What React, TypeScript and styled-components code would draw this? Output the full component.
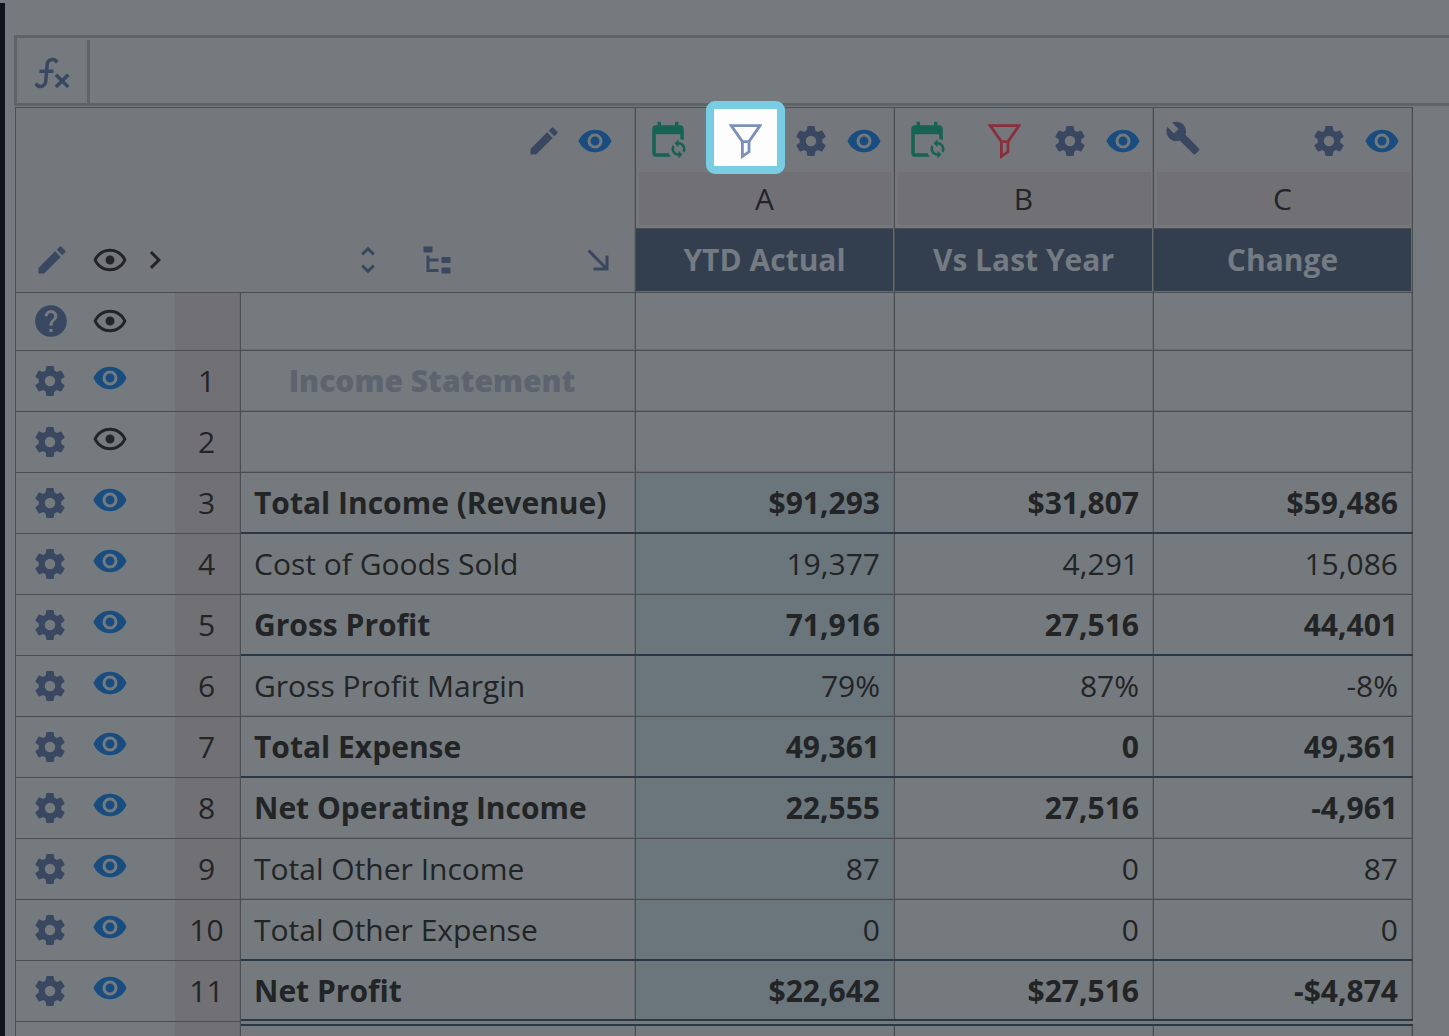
import React from "react";
import styled, { createGlobalStyle, css } from "styled-components";

const c = {
  page: "#747a7d",
  head: "#74777b",
  letter: "#707075",
  tint: "#6b757c",
  line: "#4b4e51",
  soft: "#686c6f",
  frame: "#5f6466",
  navy: "#333e4e",
  rule: "#2c3746",
  ink: "#222426",
  muted: "#5e6370",
  slate: "#3a4761",
  blue: "#194d80",
  green: "#166253",
  red: "#8b2f3f",
  rail: "#10131c",
  cyan: "#78cde2",
};

const Global = createGlobalStyle`
  *, *::before, *::after { box-sizing: border-box; }
  body {
    margin: 0;
    background: ${c.page};
    color: ${c.ink};
    font-family: "Open Sans", "Noto Sans", sans-serif;
    font-size: 30px;
    line-height: 40px;
  }
`;

const Shell = styled.div`
  display: flex;
  height: 100vh;
  overflow: hidden;
`;

const Rail = styled.div`
  flex: 0 0 5px;
  margin-top: 3px;
  background: ${c.rail};
`;

const Main = styled.main`
  flex: 1;
  min-width: 0;
  padding: 35px 0 0 9px;
`;

const FormulaBar = styled.div`
  display: flex;
  align-items: flex-end;
  height: 71px;
  border: 3px solid ${c.frame};
  border-right: 0;
`;

const FormulaLabel = styled.label`
  display: flex;
  align-items: center;
  justify-content: center;
  flex: 0 0 73px;
  height: 63px;
  padding-top: 3px;
  border-right: 3px solid ${c.frame};
  color: ${c.slate};
`;

const FormulaInput = styled.input`
  flex: 1;
  min-width: 0;
  height: 63px;
  padding: 0 16px;
  border: 0;
  outline: 0;
  background: transparent;
  color: ${c.ink};
  font: inherit;
`;

const Grid = styled.table`
  width: 1398px;
  margin: 1px 0 0 1px;
  border-spacing: 0;
  table-layout: fixed;
`;

const HeadCell = styled.th`
  height: 186px;
  padding: 1px 2px 2px 0;
  background: ${c.head};
  vertical-align: top;
  font-weight: 400;
  box-shadow: inset 0 1px ${c.line}, inset 0 -1px ${c.line}, inset -1px 0 ${c.line},
    inset -2px 0 ${c.soft}, inset 0 -2px ${c.soft};
`;

const CornerCell = styled(HeadCell)`
  padding: 16px 20px 15px 19px;
  box-shadow: inset 1px 0 ${c.line}, inset 0 1px ${c.line}, inset 0 -1px ${c.line},
    inset -1px 0 ${c.line}, inset -2px 0 ${c.soft};
`;

const CornerTools = styled.div`
  display: flex;
  flex-direction: column;
  justify-content: space-between;
  height: 155px;
`;

const ToolsRow = styled.div<{ $gap: number }>`
  display: flex;
  align-items: center;
  gap: ${(p) => p.$gap}px;
`;

const CornerTop = styled(ToolsRow)`
  justify-content: flex-end;
  padding-right: 3px;
`;

const CornerBottom = styled.div`
  display: grid;
  grid-template-columns: 316px 1fr auto;
`;

const ColumnTools = styled.div`
  display: flex;
  align-items: center;
  justify-content: space-between;
  height: 64px;
  padding: 2px 11px 0 11px;
`;

const Letter = styled.div`
  height: 53px;
  margin: 0 1px 3px 3px;
  padding-right: 2px;
  background: ${c.letter};
  line-height: 54px;
  text-align: center;
`;

const Title = styled.div`
  height: 63px;
  border-top: 1px solid ${c.line};
  background: ${c.navy};
  color: #747b82;
  font-weight: 700;
  line-height: 61px;
  text-align: center;
`;

const IconButton = styled.button<{ $tone: string; $raised?: boolean }>`
  position: relative;
  display: flex;
  padding: 0 0 ${(p) => (p.$raised ? 6 : 0)}px;
  border: 0;
  background: none;
  color: ${(p) => p.$tone};
  cursor: pointer;
  svg {
    position: relative;
    display: block;
  }
`;

const SpotlightButton = styled(IconButton)`
  &::before {
    content: "";
    position: absolute;
    inset: -23px -23px -15px -22px;
    border: 8px solid ${c.cyan};
    border-radius: 9px;
    background: #fdfdfd;
  }
`;

type Rule = "soft" | "strong" | "double" | "afterDouble";

const edges = css`inset -1px 0 ${c.line}, inset -2px 0 ${c.soft}`;

const rules: Record<Rule, ReturnType<typeof css>> = {
  soft: css`inset 0 -1px ${c.line}, ${edges}, inset 0 -2px ${c.soft}`,
  strong: css`inset 0 -2px ${c.rule}, ${edges}`,
  double: css`inset 0 -1px ${c.page}, inset 0 -3px ${c.rule}, ${edges}`,
  afterDouble: css`inset 0 2px ${c.page}, inset 0 4px ${c.rule}, ${edges}`,
};

const Row = styled.tr<{ $short?: boolean }>`
  height: ${(p) => (p.$short ? 58 : 61)}px;
`;

const ControlCell = styled.td`
  padding: 0 0 2px 17px;
  box-shadow: inset 1px 0 ${c.line}, inset 0 -1px ${c.line};
`;

const NumberCell = styled.th`
  padding: 0 3px 2px 0;
  background: ${c.letter};
  font-weight: 400;
  text-align: center;
  box-shadow: inset -1px 0 ${c.line}, inset 0 -1px ${c.line}, inset -2px 0 ${c.soft};
`;

const Cell = styled.td<{ $rule: Rule; $bold?: boolean; $tint?: boolean }>`
  padding: 0 15px 2px;
  background: ${(p) => (p.$tint ? c.tint : "transparent")};
  font-weight: ${(p) => (p.$bold ? 700 : 400)};
  text-align: right;
  white-space: nowrap;
  box-shadow: ${(p) => rules[p.$rule]};
`;

const LabelCell = styled(Cell)<{ $heading?: boolean }>`
  padding: 0 26px 2px 13px;
  text-align: left;
  ${(p) =>
    p.$heading &&
    css`
      color: ${c.muted};
      font-weight: 800;
      text-align: center;
    `}
`;

const paths = {
  fx: "M12.42,5.29C11.32,5.19 10.35,6 10.25,7.11L10,10H12.82V12H9.82L9.38,17.07C9.18,19.27 7.24,20.9 5.04,20.7C3.79,20.59 2.66,19.9 2,18.83L3.5,17.33C3.83,18.38 4.96,18.97 6,18.63C6.78,18.39 7.33,17.7 7.4,16.89L7.82,12H4.82V10H8L8.27,6.93C8.46,4.73 10.39,3.1 12.6,3.28C13.86,3.39 15,4.09 15.66,5.17L14.16,6.67C13.91,5.9 13.23,5.36 12.42,5.29M22,13.65L20.59,12.24L17.76,15.07L14.93,12.24L13.5,13.65L16.35,16.5L13.5,19.33L14.93,20.74L17.76,17.91L20.59,20.74L22,19.33L19.17,16.5L22,13.65Z",
  cog: "M12,15.5A3.5,3.5 0 0,1 8.5,12A3.5,3.5 0 0,1 12,8.5A3.5,3.5 0 0,1 15.5,12A3.5,3.5 0 0,1 12,15.5M19.43,12.97C19.47,12.65 19.5,12.33 19.5,12C19.5,11.67 19.47,11.34 19.43,11L21.54,9.37C21.73,9.22 21.78,8.95 21.66,8.73L19.66,5.27C19.54,5.05 19.27,4.96 19.05,5.05L16.56,6.05C16.04,5.66 15.5,5.32 14.87,5.07L14.5,2.42C14.46,2.18 14.25,2 14,2H10C9.75,2 9.54,2.18 9.5,2.42L9.13,5.07C8.5,5.32 7.96,5.66 7.44,6.05L4.95,5.05C4.73,4.96 4.46,5.05 4.34,5.27L2.34,8.73C2.21,8.95 2.27,9.22 2.46,9.37L4.57,11C4.53,11.34 4.5,11.67 4.5,12C4.5,12.33 4.53,12.65 4.57,12.97L2.46,14.63C2.27,14.78 2.21,15.05 2.34,15.27L4.34,18.73C4.46,18.95 4.73,19.03 4.95,18.95L7.44,17.94C7.96,18.34 8.5,18.68 9.13,18.93L9.5,21.58C9.54,21.82 9.75,22 10,22H14C14.25,22 14.46,21.82 14.5,21.58L14.87,18.93C15.5,18.67 16.04,18.34 16.56,17.94L19.05,18.95C19.27,19.03 19.54,18.95 19.66,18.73L21.66,15.27C21.78,15.05 21.73,14.78 21.54,14.63L19.43,12.97Z",
  pencil:
    "M20.71,7.04C21.1,6.65 21.1,6 20.71,5.63L18.37,3.29C18,2.9 17.35,2.9 16.96,3.29L15.12,5.12L18.87,8.87M3,17.25V21H6.75L17.81,9.93L14.06,6.18L3,17.25Z",
  eye: "M12,9A3,3 0 0,0 9,12A3,3 0 0,0 12,15A3,3 0 0,0 15,12A3,3 0 0,0 12,9M12,17A5,5 0 0,1 7,12A5,5 0 0,1 12,7A5,5 0 0,1 17,12A5,5 0 0,1 12,17M12,4.5C7,4.5 2.73,7.61 1,12C2.73,16.39 7,19.5 12,19.5C17,19.5 21.27,16.39 23,12C21.27,7.61 17,4.5 12,4.5Z",
  eyeOutline:
    "M12,9A3,3 0 0,1 15,12A3,3 0 0,1 12,15A3,3 0 0,1 9,12A3,3 0 0,1 12,9M12,4.5C17,4.5 21.27,7.61 23,12C21.27,16.39 17,19.5 12,19.5C7,19.5 2.73,16.39 1,12C2.73,7.61 7,4.5 12,4.5M3.18,12C4.83,15.36 8.24,17.5 12,17.5C15.76,17.5 19.17,15.36 20.82,12C19.17,8.64 15.76,6.5 12,6.5C8.24,6.5 4.83,8.64 3.18,12Z",
  help: "M15.07,11.25L14.17,12.17C13.45,12.89 13,13.5 13,15H11V14.5C11,13.39 11.45,12.39 12.17,11.67L13.41,10.41C13.78,10.05 14,9.55 14,9C14,7.89 13.1,7 12,7A2,2 0 0,0 10,9H8A4,4 0 0,1 12,5A4,4 0 0,1 16,9C16,9.88 15.64,10.67 15.07,11.25M13,19H11V17H13M12,2A10,10 0 0,0 2,12A10,10 0 0,0 12,22A10,10 0 0,0 22,12C22,6.47 17.5,2 12,2Z",
  calendar:
    "M6,1H8V3H16V1H18V3H19C20.1,3 21,3.9 21,5V11.6C20.4,11.2 19.7,10.9 19,10.8V8.2H5V19H12.4C12.7,19.7 13.1,20.4 13.6,21H5C3.9,21 3,20.1 3,19V5C3,3.9 3.9,3 5,3H6V1M18 11V12.5C21.19 12.5 23.09 16.05 21.33 18.71L20.24 17.62C21.06 15.96 19.85 14 18 14V15.5L15.75 13.25L18 11M18 22V20.5C14.81 20.5 12.91 16.95 14.67 14.29L15.76 15.38C14.94 17.04 16.15 19 18 19V17.5L20.25 19.75L18 22Z",
  wrench:
    "M22.7,19L13.6,9.9C14.5,7.6 14,4.9 12.1,3C10.1,1 7.1,0.6 4.7,1.7L9,6L6,9L1.6,4.7C0.4,7.1 0.9,10.1 2.9,12.1C4.8,14 7.5,14.5 9.8,13.6L18.9,22.7C19.3,23.1 19.9,23.1 20.3,22.7L22.6,20.4C23.1,20 23.1,19.3 22.7,19Z",
  chevron: "M8.59,16.58L13.17,12L8.59,7.41L10,6L16,12L10,18L8.59,16.58Z",
  unfold:
    "M12,5.83L15.17,9L16.58,7.59L12,3L7.41,7.59L8.83,9L12,5.83M12,18.17L8.83,15L7.42,16.41L12,21L16.59,16.41L15.17,15L12,18.17Z",
  tree: "M3,3H9V7H3V3M15,10H21V14H15V10M15,17H21V21H15V17M13,13H7V18H13V20H7L5,20V9H7V11H13V13Z",
  arrow: "M5,6.41L6.41,5L17,15.59V9H19V19H9V17H15.59L5,6.41Z",
};

function Icon({ name, size = 36 }: { name: keyof typeof paths; size?: number }) {
  return (
    <svg width={size} height={size} viewBox="0 0 24 24" fill="currentColor" aria-hidden="true">
      <path d={paths[name]} />
    </svg>
  );
}

function Funnel() {
  return (
    <svg width="34" height="35" viewBox="0 0 34 35" fill="none" stroke="currentColor" strokeWidth="2.8" aria-hidden="true">
      <path d="M3.2 1.6H32L21 17.6H14.4Z" />
      <path d="M14.4 17.6V32.4L21 27.8V17.6" />
    </svg>
  );
}

type Tool = { name: keyof typeof paths; label: string; tone: string; size?: number; raised?: boolean };

function ToolButton({ name, label, tone, size, raised }: Tool) {
  return (
    <IconButton type="button" aria-label={label} $tone={tone} $raised={raised}>
      <Icon name={name} size={size} />
    </IconButton>
  );
}

const columns = [
  { letter: "A", title: "YTD Actual", kind: "active" },
  { letter: "B", title: "Vs Last Year", kind: "filtered" },
  { letter: "C", title: "Change", kind: "formula" },
];

type Line = {
  n: string;
  label: string;
  values: string[];
  bold?: boolean;
  heading?: boolean;
  shown?: boolean;
  rule?: Rule;
};

const lines: Line[] = [
  { n: "1", label: "Income Statement", values: ["", "", ""], heading: true, shown: true },
  { n: "2", label: "", values: ["", "", ""] },
  { n: "3", label: "Total Income (Revenue)", values: ["$91,293", "$31,807", "$59,486"], bold: true, shown: true, rule: "strong" },
  { n: "4", label: "Cost of Goods Sold", values: ["19,377", "4,291", "15,086"], shown: true },
  { n: "5", label: "Gross Profit", values: ["71,916", "27,516", "44,401"], bold: true, shown: true, rule: "strong" },
  { n: "6", label: "Gross Profit Margin", values: ["79%", "87%", "-8%"], shown: true },
  { n: "7", label: "Total Expense", values: ["49,361", "0", "49,361"], bold: true, shown: true, rule: "strong" },
  { n: "8", label: "Net Operating Income", values: ["22,555", "27,516", "-4,961"], bold: true, shown: true },
  { n: "9", label: "Total Other Income", values: ["87", "0", "87"], shown: true },
  { n: "10", label: "Total Other Expense", values: ["0", "0", "0"], shown: true, rule: "strong" },
  { n: "11", label: "Net Profit", values: ["$22,642", "$27,516", "-$4,874"], bold: true, shown: true, rule: "double" },
];

export default function App() {
  return (
    <>
      <Global />
      <Shell>
        <Rail />
        <Main>
          <FormulaBar>
            <FormulaLabel htmlFor="formula" aria-label="Formula">
              <Icon name="fx" size={42} />
            </FormulaLabel>
            <FormulaInput id="formula" type="text" />
          </FormulaBar>
          <Grid>
            <colgroup>
              <col style={{ width: 160 }} />
              <col style={{ width: 66 }} />
              <col style={{ width: 395 }} />
              <col />
              <col />
              <col />
            </colgroup>
            <thead>
              <tr>
                <CornerCell colSpan={3}>
                  <CornerTools>
                    <CornerTop $gap={15}>
                      <ToolButton name="pencil" label="Edit columns" tone={c.slate} />
                      <ToolButton name="eye" label="Show columns" tone={c.blue} />
                    </CornerTop>
                    <CornerBottom>
                      <ToolsRow $gap={22}>
                        <ToolButton name="pencil" label="Edit rows" tone={c.slate} />
                        <ToolsRow $gap={9}>
                          <ToolButton name="eyeOutline" label="Row visibility" tone={c.ink} />
                          <ToolButton name="chevron" label="Expand" tone={c.ink} />
                        </ToolsRow>
                      </ToolsRow>
                      <ToolsRow $gap={33}>
                        <ToolButton name="unfold" label="Unfold rows" tone={c.slate} />
                        <ToolButton name="tree" label="Row hierarchy" tone={c.slate} />
                      </ToolsRow>
                      <ToolButton name="arrow" label="Go to last cell" tone={c.slate} />
                    </CornerBottom>
                  </CornerTools>
                </CornerCell>
                {columns.map((col) => (
                  <HeadCell key={col.letter} scope="col">
                    <ColumnTools>
                      <ToolsRow $gap={39}>
                        {col.kind === "formula" ? (
                          <ToolButton name="wrench" label="Edit formula" tone={c.slate} raised />
                        ) : (
                          <ToolButton name="calendar" label="Date range" tone={c.green} size={42} />
                        )}
                        {col.kind === "active" && (
                          <SpotlightButton type="button" aria-label="Filter column" $tone="#7b8fba">
                            <Funnel />
                          </SpotlightButton>
                        )}
                        {col.kind === "filtered" && (
                          <IconButton type="button" aria-label="Filter column" $tone={c.red}>
                            <Funnel />
                          </IconButton>
                        )}
                      </ToolsRow>
                      <ToolsRow $gap={17}>
                        <ToolButton name="cog" label="Column settings" tone={c.slate} />
                        <ToolButton name="eye" label="Column visibility" tone={c.blue} />
                      </ToolsRow>
                    </ColumnTools>
                    <Letter>{col.letter}</Letter>
                    <Title>{col.title}</Title>
                  </HeadCell>
                ))}
              </tr>
            </thead>
            <tbody>
              <Row $short>
                <ControlCell>
                  <ToolsRow $gap={22}>
                    <ToolButton name="help" label="Help" tone={c.slate} size={38} />
                    <ToolButton name="eyeOutline" label="Row visibility" tone={c.ink} />
                  </ToolsRow>
                </ControlCell>
                <NumberCell />
                <LabelCell $rule="soft" />
                <Cell $rule="soft" />
                <Cell $rule="soft" />
                <Cell $rule="soft" />
              </Row>
              {lines.map((line) => (
                <Row key={line.n}>
                  <ControlCell>
                    <ToolsRow $gap={24}>
                      <ToolButton name="cog" label="Row settings" tone={c.slate} />
                      <ToolButton
                        name={line.shown ? "eye" : "eyeOutline"}
                        label="Row visibility"
                        tone={line.shown ? c.blue : c.ink}
                        raised
                      />
                    </ToolsRow>
                  </ControlCell>
                  <NumberCell scope="row">{line.n}</NumberCell>
                  <LabelCell $rule={line.rule ?? "soft"} $bold={line.bold} $heading={line.heading}>
                    {line.label}
                  </LabelCell>
                  {line.values.map((value, i) => (
                    <Cell key={i} $rule={line.rule ?? "soft"} $bold={line.bold} $tint={i === 0 && value !== ""}>
                      {value}
                    </Cell>
                  ))}
                </Row>
              ))}
              <Row>
                <ControlCell />
                <NumberCell />
                <LabelCell $rule="afterDouble" />
                <Cell $rule="afterDouble" />
                <Cell $rule="afterDouble" />
                <Cell $rule="afterDouble" />
              </Row>
            </tbody>
          </Grid>
        </Main>
      </Shell>
    </>
  );
}
